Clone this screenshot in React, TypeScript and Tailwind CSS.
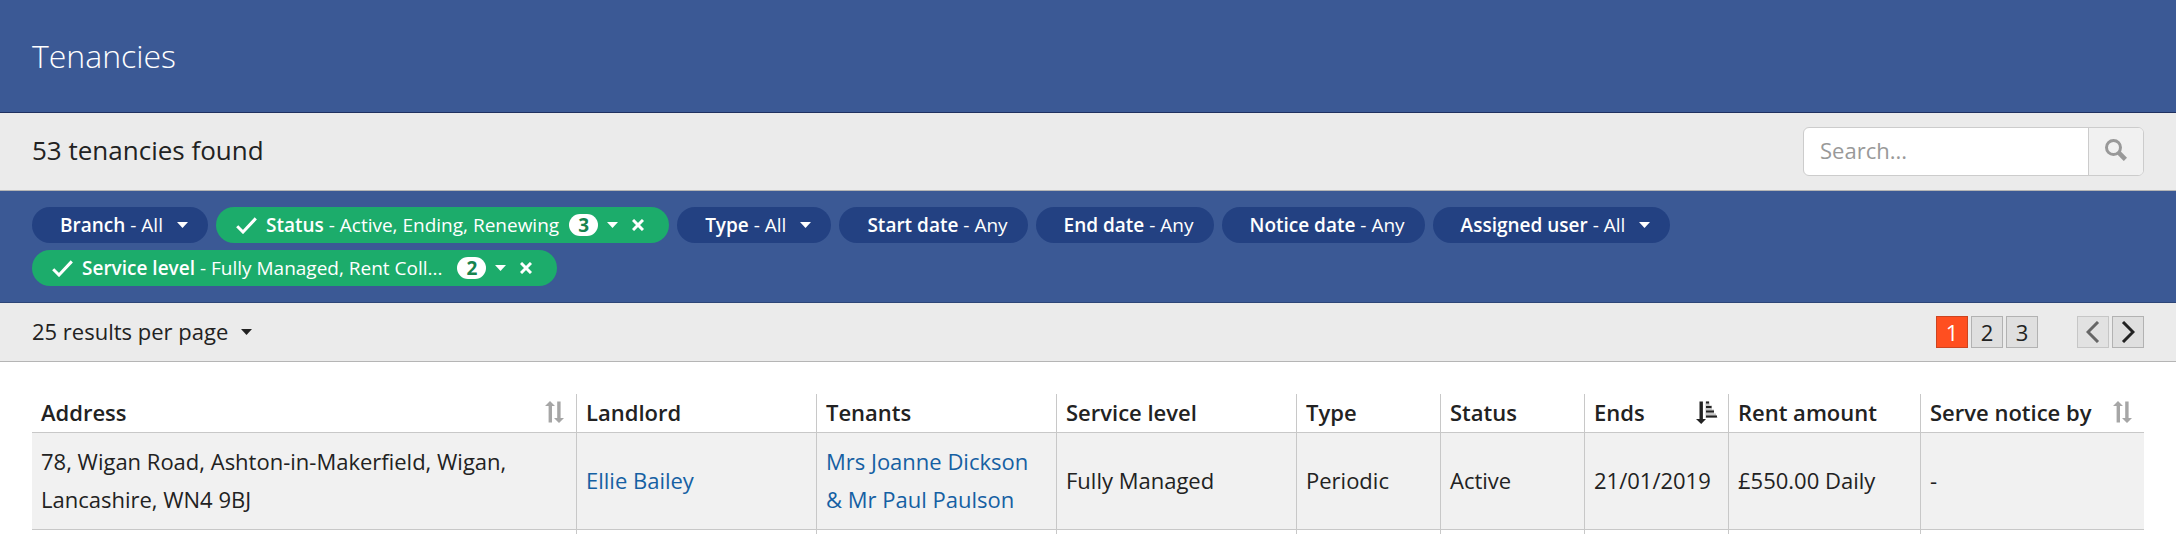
const filters = [
  { name: 'Branch', value: 'All', menu: true },
  { name: 'Status', value: 'Active, Ending, Renewing', menu: true, count: 3 },
  { name: 'Type', value: 'All', menu: true },
  { name: 'Start date', value: 'Any' },
  { name: 'End date', value: 'Any' },
  { name: 'Notice date', value: 'Any' },
  { name: 'Assigned user', value: 'All', menu: true },
  { name: 'Service level', value: 'Fully Managed, Rent Coll... ', menu: true, count: 2 },
]

const columns = [
  { title: 'Address', width: '', sort: 'none' },
  { title: 'Landlord', width: 'w-[240px]' },
  { title: 'Tenants', width: 'w-[240px]' },
  { title: 'Service level', width: 'w-[240px]' },
  { title: 'Type', width: 'w-[144px]' },
  { title: 'Status', width: 'w-[144px]' },
  { title: 'Ends', width: 'w-[144px]', sort: 'asc' },
  { title: 'Rent amount', width: 'w-[192px]' },
  { title: 'Serve notice by', width: 'w-[224px]', sort: 'none' },
]

const cell = 'border-b border-l border-[#c8c8c8] pr-[10px] pb-0.5 pl-[9px] first:border-l-0'

function Caret() {
  return (
    <svg className="h-[6px] w-[11px] shrink-0" viewBox="0 0 11 6" fill="currentColor" aria-hidden="true">
      <path d="M0 0h11L5.5 6z" />
    </svg>
  )
}

function Check() {
  return (
    <svg className="h-[17px] w-[21px] shrink-0" viewBox="0 0 21 17" fill="none" stroke="currentColor" strokeWidth="3" aria-hidden="true">
      <path d="M1.2 9.2L7 15L19.8 1.4" />
    </svg>
  )
}

function SortIcon({ sort }: { sort: string }) {
  if (sort === 'asc') {
    return (
      <svg className="h-[23px] w-[22px] shrink-0" viewBox="0 0 22 23" aria-hidden="true">
        <path d="M9.5 0.5h4v4h2.5v4h2v4h2v4h2v.5H9.5z" fill="#c4c4c4" />
        <path d="M3.5 0.5h3.4V18H10l-4.8 5L0 18h3.5z" fill="#222" />
        <path d="M10 1.5h3M10 6h5.5M10 10.5h8M10 15.5h11" stroke="#222" strokeWidth="2" />
      </svg>
    )
  }
  return (
    <svg className="h-[22px] w-[21px] shrink-0 text-[#a6a6a6]" viewBox="0 0 21 22" fill="currentColor" aria-hidden="true">
      <path d="M5 0l5 5H7v16.5H3.6V5H0zM12.2 .5h3.4V17H19l-5 5-5-5h3.2z" />
    </svg>
  )
}

function Filter({ name, value, menu, count }: { name: string; value: string; menu?: boolean; count?: number }) {
  if (!count) {
    return (
      <button className="flex h-9 items-center rounded-full bg-[#234182] pr-5 pl-7 whitespace-pre">
        <span className="font-semibold">{name}</span>
        <span> - {value}</span>
        {menu && <span className="ml-[14px]"><Caret /></span>}
      </button>
    )
  }
  return (
    <div className="flex h-9 items-center rounded-full bg-[#1cac6b] pr-6 pl-5">
      <button className="flex items-center whitespace-pre">
        <Check />
        <span className="ml-[9px] font-semibold">{name}</span>
        <span> - {value}</span>
        <span className="ml-[10px] flex h-[22px] w-[29px] items-center justify-center rounded-full bg-white font-bold text-[#17834f]">
          {count}
        </span>
        <span className="ml-[9px]"><Caret /></span>
      </button>
      <button className="ml-[13px] p-px" aria-label={`Clear ${name}`}>
        <svg className="size-[12px]" viewBox="0 0 12 12" stroke="currentColor" strokeWidth="3" aria-hidden="true">
          <path d="M1 1l10 10M11 1L1 11" />
        </svg>
      </button>
    </div>
  )
}

export default function App() {
  return (
    <div className="bg-white font-['Open_Sans',sans-serif] text-[22px] text-[#222]">
      <header className="flex h-[113px] items-center border-b border-[#1f3060] bg-[#3b5995] px-8">
        <h1 className="text-[32px] font-light text-white">Tenancies</h1>
      </header>

      <div className="flex h-[78px] items-center justify-between border-b border-[#b5b5b5] bg-[#ebebeb] px-8">
        <h2 className="pb-0.5 text-[26px]">53 tenancies found</h2>
        <form className="flex h-[49px] w-[341px] overflow-hidden rounded-md border border-[#ccc] bg-white">
          <input
            type="text"
            aria-label="Search tenancies"
            placeholder="Search..."
            className="min-w-0 flex-1 px-4 pb-0.5 outline-none placeholder:text-[#999]"
          />
          <button type="button" aria-label="Search" className="flex w-[55px] items-center justify-center border-l border-[#ccc] bg-[#f1f1f1] pb-1 text-[#999]">
            <svg className="size-[22px]" viewBox="0 0 22 22" fill="none" stroke="currentColor" aria-hidden="true">
              <circle cx="8.5" cy="8.5" r="7" strokeWidth="3" />
              <path d="M13.2 13.2l7.2 7.2" strokeWidth="4.6" />
            </svg>
          </button>
        </form>
      </div>

      <div className="flex flex-wrap gap-x-2 gap-y-[7px] border-b border-[#2c4577] bg-[#3b5995] px-8 py-4 text-[19px] text-white">
        {filters.map((filter) => (
          <Filter key={filter.name} {...filter} />
        ))}
      </div>

      <div className="flex h-[59px] items-center justify-between border-b border-[#b5b5b5] bg-[#ebebeb] px-8">
        <label className="flex items-center gap-3">
          <select aria-label="Results per page" className="appearance-none pb-0.5 outline-none">
            <option>25 results per page</option>
          </select>
          <Caret />
        </label>
        <nav className="flex gap-[3px]" aria-label="Pages">
          <button className="size-8 border border-[#cc4420] bg-[#ff4f20] leading-[30px] text-white">1</button>
          <button className="size-8 border border-[#b2b2b2] bg-[#dfdfdf] leading-[30px]">2</button>
          <button className="size-8 border border-[#b2b2b2] bg-[#dfdfdf] leading-[30px]">3</button>
          <button className="ml-9 flex size-8 items-center justify-center border border-[#c6c6c6] bg-[#e2e2e2] text-[#666]" aria-label="Previous page">
            <svg className="h-[22px] w-[14px]" viewBox="0 0 14 22" fill="none" stroke="currentColor" strokeWidth="3" aria-hidden="true">
              <path d="M12 1L2 11l10 10" />
            </svg>
          </button>
          <button className="flex size-8 items-center justify-center border border-[#b2b2b2] bg-[#dfdfdf]" aria-label="Next page">
            <svg className="h-[22px] w-[14px]" viewBox="0 0 14 22" fill="none" stroke="currentColor" strokeWidth="3" aria-hidden="true">
              <path d="M2 1l10 10L2 21" />
            </svg>
          </button>
        </nav>
      </div>

      <main className="px-8 pt-8">
        <table className="w-full table-fixed border-separate border-spacing-0 text-left">
          <thead>
            <tr className="h-[39px]">
              {columns.map(({ title, width, sort }) => (
                <th key={title} scope="col" className={`${cell} ${width} font-semibold whitespace-nowrap`}>
                  <div className="flex items-center justify-between">
                    {title}
                    {sort && <SortIcon sort={sort} />}
                  </div>
                </th>
              ))}
            </tr>
          </thead>
          <tbody>
            <tr className="h-[97px] bg-[#f1f1f1] leading-[38px]">
              <td className={cell}>78, Wigan Road, Ashton-in-Makerfield, Wigan, Lancashire, WN4 9BJ</td>
              <td className={cell}><a href="#landlord" className="text-[#1560a3]">Ellie Bailey</a></td>
              <td className={cell}><a href="#tenants" className="text-[#1560a3]">Mrs Joanne Dickson &amp; Mr Paul Paulson</a></td>
              <td className={cell}>Fully Managed</td>
              <td className={cell}>Periodic</td>
              <td className={cell}>Active</td>
              <td className={cell}>21/01/2019</td>
              <td className={cell}>£550.00 Daily</td>
              <td className={cell}>-</td>
            </tr>
            <tr className="h-1">
              {columns.map(({ title }) => (
                <td key={title} className="border-l border-[#c8c8c8] first:border-l-0" />
              ))}
            </tr>
          </tbody>
        </table>
      </main>
    </div>
  )
}
